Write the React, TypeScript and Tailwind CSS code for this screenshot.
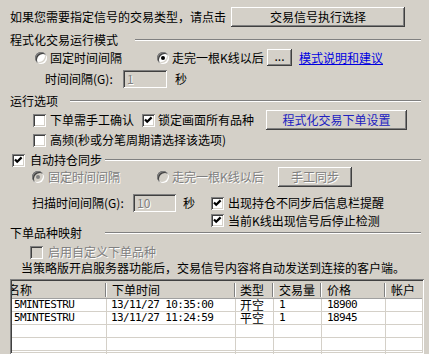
import React from "react";

const raised =
  "bg-[#d4d0c8] shadow-[inset_-1px_-1px_0_#404040,inset_1px_1px_0_#ffffff,inset_-2px_-2px_0_#808080,inset_2px_2px_0_#d4d0c8]";
const sunken =
  "shadow-[inset_1px_1px_0_#808080,inset_-1px_-1px_0_#ffffff,inset_2px_2px_0_#404040,inset_-2px_-2px_0_#d4d0c8]";
const grayText = "text-[#808080] [text-shadow:1px_1px_0_#ffffff]";

function Check({ checked = false, disabled = false }: { checked?: boolean; disabled?: boolean }) {
  return (
    <div
      className={`flex h-[13px] w-[13px] shrink-0 items-center justify-center ${sunken} ${
        disabled ? "bg-[#d4d0c8]" : "bg-white"
      }`}
    >
      {checked && (
        <svg width="13" height="13" viewBox="0 0 13 13">
          <polyline points="3,5.5 5.2,7.8 9.6,3.4" fill="none" stroke={disabled ? "#808080" : "#000"} strokeWidth="2.2" />
        </svg>
      )}
    </div>
  );
}

function Radio({ on = false, disabled = false }: { on?: boolean; disabled?: boolean }) {
  return (
    <div
      className={`flex h-[12px] w-[12px] shrink-0 items-center justify-center rounded-full ${sunken} ${
        disabled ? "bg-[#d4d0c8]" : "bg-white"
      }`}
    >
      {on && <div className={`h-[4px] w-[4px] rounded-full ${disabled ? "bg-[#808080]" : "bg-black"}`} />}
    </div>
  );
}

function Line({ className = "" }: { className?: string }) {
  return <div className={`h-[2px] flex-1 border-t border-b border-t-[#808080] border-b-white ${className}`} />;
}

function Field({ value, className = "" }: { value: string; className?: string }) {
  return (
    <div className={`flex h-[18px] items-center bg-[#d4d0c8] pl-[4px] ${sunken} ${grayText} ${className}`}>
      {value}
    </div>
  );
}

const rows = [
  { name: "5MINTESTRU", time: "13/11/27 10:35:00", type: "开空", qty: "1", price: "18900" },
  { name: "5MINTESTRU", time: "13/11/27 11:24:59", type: "平空", qty: "1", price: "18945" },
  null,
  null,
  null,
];

export default function App() {
  return (
    <div className="flex h-[354px] w-[429px] flex-col overflow-hidden bg-[#d4d0c8] pr-[8px] pt-[7px] text-[12px] leading-[14px] text-black font-['Noto_Sans_CJK_SC',sans-serif]">
      {/* top */}
      <div className="flex h-[20px] items-center pl-[10px]">
        <span className="w-[221px] whitespace-nowrap">如果您需要指定信号的交易类型，请点击</span>
        <div className={`flex h-[20px] w-[174px] items-center justify-center ${raised}`}>交易信号执行选择</div>
      </div>

      {/* 程式化交易运行模式 */}
      <div className="mt-[6px] flex h-[14px] items-center pl-[10px]">
        <span className="w-[125px] whitespace-nowrap">程式化交易运行模式</span>
        <Line />
      </div>
      <div className="mt-[2px] flex h-[17px] items-center pl-[35px]">
        <Radio />
        <span className="ml-[3px] w-[107px] whitespace-nowrap">固定时间间隔</span>
        <Radio on />
        <span className="ml-[3px] w-[95px] whitespace-nowrap">走完一根K线以后</span>
        <div className={`flex h-[17px] w-[25px] items-center justify-center pb-[3px] ${raised}`}>...</div>
        <span className="ml-[7px] whitespace-nowrap text-[#0000e0] underline">模式说明和建议</span>
      </div>
      <div className="mt-[4px] flex h-[18px] items-center pl-[45px]">
        <span className="w-[78px] whitespace-nowrap">时间间隔(G):</span>
        <Field value="1" className="w-[44px]" />
        <span className="ml-[8px]">秒</span>
      </div>

      {/* 运行选项 */}
      <div className="mt-[6px] flex h-[14px] items-center pl-[10px]">
        <span className="w-[60px] whitespace-nowrap">运行选项</span>
        <Line />
      </div>
      <div className="mt-[2px] flex h-[20px] items-center pl-[33px]">
        <Check />
        <span className="ml-[4px] w-[92px] whitespace-nowrap">下单需手工确认</span>
        <Check checked />
        <span className="ml-[3px] w-[108px] whitespace-nowrap">锁定画面所有品种</span>
        <div className={`flex h-[20px] w-[141px] items-center justify-center text-[#2020c0] ${raised}`}>
          程式化交易下单设置
        </div>
      </div>
      <div className="mt-[3px] flex h-[14px] items-center pl-[33px]">
        <Check />
        <span className="ml-[4px] whitespace-nowrap">高频(秒或分笔周期请选择该选项)</span>
      </div>

      {/* 自动持仓同步 */}
      <div className="mt-[6px] flex h-[14px] items-center pl-[12px]">
        <Check checked />
        <span className="ml-[5px] w-[75px] whitespace-nowrap">自动持仓同步</span>
        <Line />
      </div>
      <div className="flex h-[20px] items-center pl-[32px]">
        <Radio on disabled />
        <span className={`ml-[4px] w-[109px] whitespace-nowrap ${grayText}`}>固定时间间隔</span>
        <Radio disabled />
        <span className={`ml-[3px] w-[106px] whitespace-nowrap ${grayText}`}>走完一根K线以后</span>
        <div className={`flex h-[20px] w-[74px] items-center justify-center ${raised} ${grayText}`}>手工同步</div>
      </div>
      <div className="mt-[7px] flex h-[18px] items-center pl-[32px]">
        <span className="w-[101px] whitespace-nowrap">扫描时间间隔(G):</span>
        <Field value="10" className="w-[43px]" />
        <span className="ml-[7px] w-[28px]">秒</span>
        <Check checked />
        <span className="ml-[4px] whitespace-nowrap">出现持仓不同步后信息栏提醒</span>
      </div>
      <div className="mt-[2px] flex h-[13px] items-center pl-[211px]">
        <Check checked />
        <span className="ml-[4px] whitespace-nowrap">当前K线出现信号后停止检测</span>
      </div>

      {/* 下单品种映射 */}
      <div className="flex h-[12px] items-center pl-[10px]">
        <span className="w-[95px] whitespace-nowrap">下单品种映射</span>
        <Line />
      </div>
      <div className="mt-[6px] flex h-[14px] items-center pl-[30px]">
        <Check disabled />
        <span className={`ml-[5px] whitespace-nowrap ${grayText}`}>启用自定义下单品种</span>
      </div>
      <div className="mt-[2px] flex h-[14px] items-center whitespace-nowrap pl-[21px]">
        当策略版开启服务器功能后，交易信号内容将自动发送到连接的客户端。
      </div>

      {/* list */}
      <div className={`ml-[10px] mt-[4px] flex w-[414px] flex-1 flex-col overflow-hidden bg-white p-[2px] ${sunken}`}>
        <div className="flex h-[18px] shrink-0 border-b border-[#a0a0a0] bg-[#d4d0c8]">
          <div className="flex w-[95px] items-center justify-between overflow-hidden">
            <span className="ml-[-4px] whitespace-nowrap">名称</span>
            <span className="h-[14px] w-[2px] border-l border-r border-l-[#808080] border-r-white" />
          </div>
          <div className="flex w-[129px] items-center justify-between pl-[5px]">
            <span>下单时间</span>
            <span className="h-[14px] w-[2px] border-l border-r border-l-[#808080] border-r-white" />
          </div>
          <div className="flex w-[38px] items-center justify-between pl-[4px]">
            <span>类型</span>
            <span className="h-[14px] w-[2px] border-l border-r border-l-[#808080] border-r-white" />
          </div>
          <div className="flex w-[48px] items-center justify-between pl-[5px]">
            <span>交易量</span>
            <span className="h-[14px] w-[2px] border-l border-r border-l-[#808080] border-r-white" />
          </div>
          <div className="flex w-[64px] items-center justify-between pl-[5px]">
            <span>价格</span>
            <span className="h-[14px] w-[2px] border-l border-r border-l-[#808080] border-r-white" />
          </div>
          <div className="flex w-[36px] items-center pl-[5px]">
            <span>帐户</span>
          </div>
        </div>
        {rows.map((r, i) => (
          <div
            key={i}
            className="flex h-[13px] shrink-0 border-b border-[#d4d0c8] leading-[12px] text-[11px] tracking-[-0.6px] font-['DejaVu_Sans_Mono',monospace]"
          >
            <div className="w-[95px] overflow-hidden whitespace-nowrap border-r border-[#d4d0c8] pl-[2px]">{r?.name}</div>
            <div className="w-[129px] whitespace-nowrap border-r border-[#d4d0c8] pl-[4px]">{r?.time}</div>
            <div className="w-[38px] whitespace-nowrap border-r border-[#d4d0c8] pl-[4px] text-[12px] tracking-normal font-['Noto_Sans_CJK_SC',sans-serif]">
              {r?.type}
            </div>
            <div className="w-[48px] border-r border-[#d4d0c8] pl-[5px]">{r?.qty}</div>
            <div className="w-[64px] border-r border-[#d4d0c8] pl-[5px]">{r?.price}</div>
            <div className="w-[36px]" />
          </div>
        ))}
      </div>
    </div>
  );
}
